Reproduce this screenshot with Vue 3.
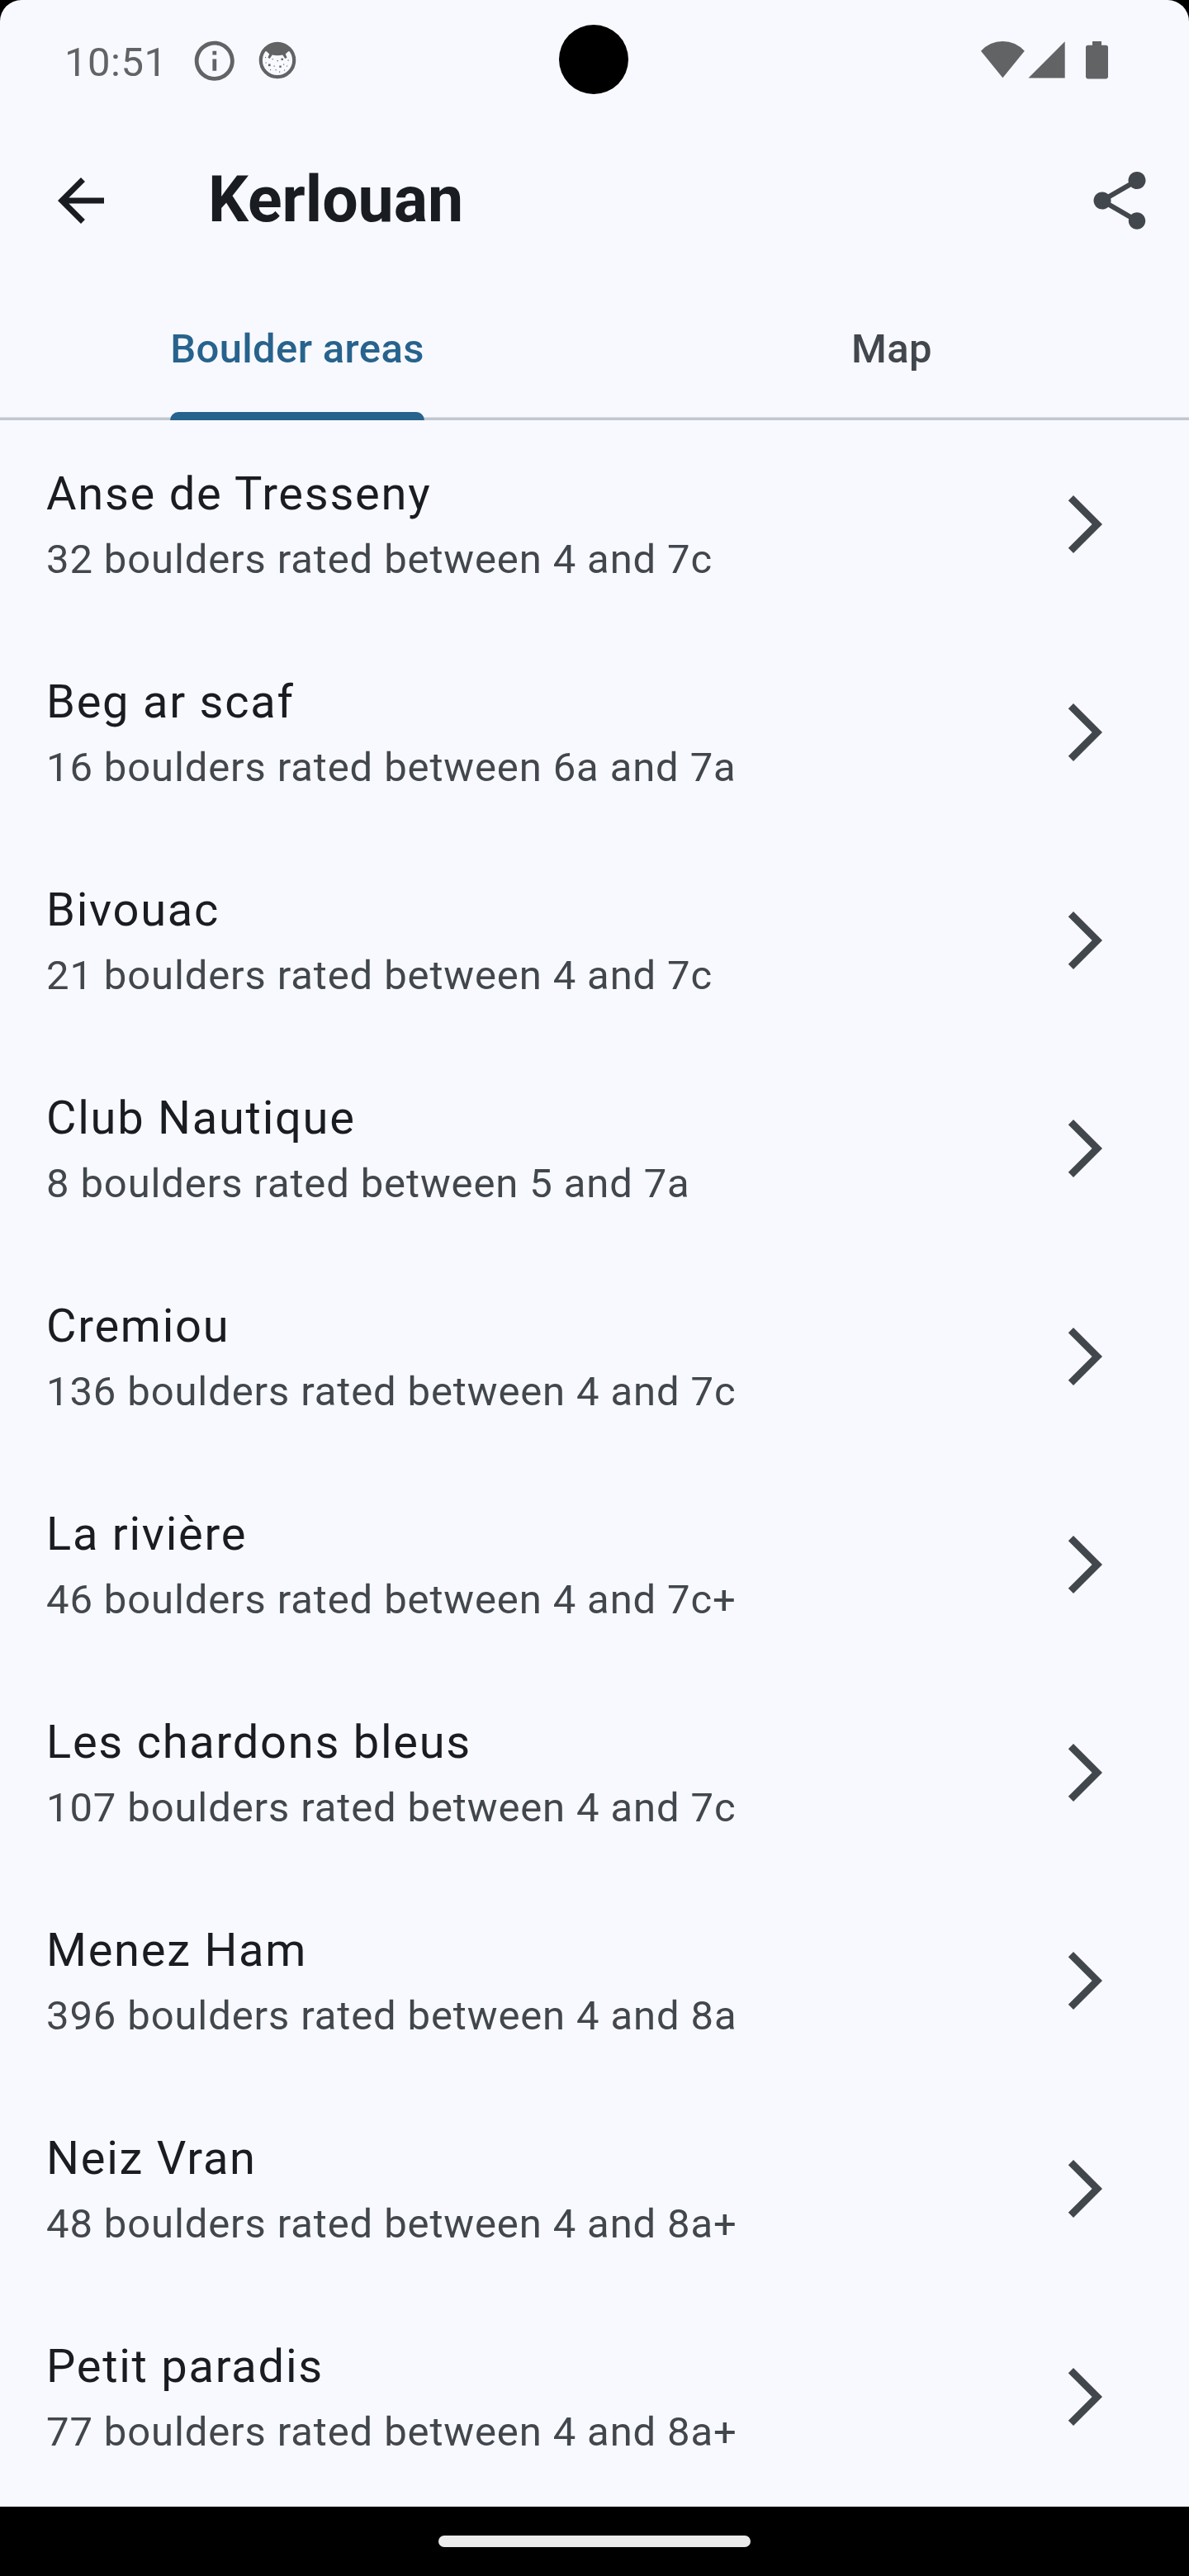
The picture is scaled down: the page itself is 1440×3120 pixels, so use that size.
<script setup>
const tabs = [
  { label: 'Boulder areas', active: true },
  { label: 'Map', active: false },
]

const areas = [
  { name: 'Anse de Tresseny', detail: '32 boulders rated between 4 and 7c' },
  { name: 'Beg ar scaf', detail: '16 boulders rated between 6a and 7a' },
  { name: 'Bivouac', detail: '21 boulders rated between 4 and 7c' },
  { name: 'Club Nautique', detail: '8 boulders rated between 5 and 7a' },
  { name: 'Cremiou', detail: '136 boulders rated between 4 and 7c' },
  { name: 'La rivière', detail: '46 boulders rated between 4 and 7c+' },
  { name: 'Les chardons bleus', detail: '107 boulders rated between 4 and 7c' },
  { name: 'Menez Ham', detail: '396 boulders rated between 4 and 8a' },
  { name: 'Neiz Vran', detail: '48 boulders rated between 4 and 8a+' },
  { name: 'Petit paradis', detail: '77 boulders rated between 4 and 8a+' },
]
</script>

<template>
  <div class="device">
    <div class="screen">
      <div class="status-bar">
        <div class="status-left">
          <span class="clock">10:51</span>
          <svg class="info" viewBox="0 0 24 24">
            <path d="M11 7h2v2h-2zM11 11h2v6h-2zM12 2C6.48 2 2 6.48 2 12s4.48 10 10 10 10-4.48 10-10S17.52 2 12 2zm0 18c-4.41 0-8-3.59-8-8s3.59-8 8-8 8 3.59 8 8-3.59 8-8 8z" />
          </svg>
          <svg class="face" viewBox="0 0 46 46">
            <circle cx="23" cy="23" r="20.2" fill="none" stroke="currentColor" stroke-width="4.2" />
            <path d="M7 12Q13 3 23 2.500Q33 3 39 12L36.200 12.300L32.700 15.500L34.600 19.800L32.300 21L29.300 16.500Q23 17.800 16.700 16.500L13.700 21L11.400 19.800L13.300 15.500L9.800 12.300Z" />
            <g>
              <rect x="27.500" y="20.600" width="2.400" height="2.400" />
              <rect x="12" y="27.500" width="2.600" height="2.600" />
              <rect x="25.300" y="29.500" width="2.400" height="2.400" />
              <rect x="16.500" y="21" width="1.200" height="1.200" />
              <rect x="22.500" y="23" width="1.300" height="1.300" />
              <rect x="8" y="19" width="1.100" height="1.100" />
              <rect x="35.500" y="22.500" width="1.200" height="1.200" />
              <rect x="8.500" y="25.500" width="1.100" height="1.100" />
              <rect x="18.500" y="29.500" width="1.200" height="1.200" />
              <rect x="30" y="27.500" width="1.200" height="1.200" />
              <rect x="34" y="29.500" width="1.100" height="1.100" />
              <rect x="14" y="34" width="1.100" height="1.100" />
              <rect x="20.500" y="34" width="1.200" height="1.200" />
              <rect x="25" y="36.500" width="1.200" height="1.200" />
              <rect x="31" y="34.500" width="1.100" height="1.100" />
            </g>
          </svg>
        </div>
        <div class="status-right">
          <svg class="signals" viewBox="0 0 155 46">
            <path d="M0 11.700Q11 0 26.400 0T52.800 11.700L26.400 44.200Z" />
            <path d="M57.500 44.500H101.700V.3Z" />
            <path d="M135 0h11v4.800h5.200q2.800 0 2.800 2.800v35q0 2.800-2.800 2.800H129.800q-2.800 0-2.800-2.800v-35q0-2.800 2.800-2.800H135Z" />
          </svg>
        </div>
        <div class="camera"></div>
      </div>

      <header class="app-bar">
        <svg class="icon back" viewBox="0 0 24 24">
          <path d="M20 11H7.830l5.590-5.590L12 4l-8 8 8 8 1.410-1.410L7.830 13H20v-2z" />
        </svg>
        <h1 class="title">Kerlouan</h1>
        <svg class="icon share" viewBox="0 0 24 24">
          <path d="M18 16.080c-.76 0-1.440.3-1.960.77L8.910 12.700c.05-.23.09-.46.09-.7s-.04-.47-.09-.7l7.050-4.110c.54.5 1.250.81 2.040.81 1.660 0 3-1.340 3-3s-1.340-3-3-3-3 1.340-3 3c0 .24.04.47.09.7L8.040 9.810C7.500 9.310 6.790 9 6 9c-1.660 0-3 1.340-3 3s1.340 3 3 3c.79 0 1.500-.31 2.040-.81l7.120 4.160c-.05.21-.08.43-.08.65 0 1.610 1.310 2.920 2.920 2.920s2.920-1.310 2.920-2.920-1.310-2.920-2.920-2.920z" />
        </svg>
      </header>

      <nav class="tabs">
        <div v-for="tab in tabs" :key="tab.label" class="tab">
          <div class="tab-label" :class="{ active: tab.active }">{{ tab.label }}</div>
        </div>
      </nav>

      <ul class="areas">
        <li v-for="area in areas" :key="area.name" class="area">
          <div class="area-text">
            <div class="name">{{ area.name }}</div>
            <div class="detail">{{ area.detail }}</div>
          </div>
          <svg class="icon" viewBox="0 0 24 24">
            <path d="M6.230 20.230L8 22l10-10L8 2 6.230 3.770 14.460 12z" />
          </svg>
        </li>
      </ul>
    </div>

    <div class="gesture-bar">
      <div class="handle"></div>
    </div>
  </div>
</template>

<style>
body {
  margin: 0;
  background: #000;
}
</style>

<style scoped>
.device {
  width: 1440px;
  height: 3120px;
  display: flex;
  flex-direction: column;
  background: #000;
  font-family: Roboto, "Liberation Sans", sans-serif;
  overflow: hidden;
}
.screen {
  height: 3036px;
  background: #f8f9ff;
  border-radius: 26px 26px 0 0;
  color: #42474e;
}
svg {
  display: block;
  fill: currentColor;
  flex: none;
}
.status-bar {
  position: relative;
  height: 131px;
  box-sizing: border-box;
  padding: 45px 98px 0 78px;
  display: flex;
  justify-content: space-between;
  align-items: flex-start;
  color: #626365;
}
.status-left {
  display: flex;
  align-items: flex-start;
}
.clock {
  width: 153px;
  font-size: 49px;
  line-height: 61px;
  letter-spacing: 0.5px;
}
.info {
  width: 57.6px;
  height: 57.6px;
}
.face {
  width: 46px;
  height: 46px;
  margin: 5.300px 0 0 24.900px;
}
.status-right {
  padding-top: 5px;
}
.signals {
  width: 155px;
  height: 46px;
  margin-right: -1px;
}
.camera {
  position: absolute;
  left: 677px;
  top: 30px;
  width: 84px;
  height: 84px;
  border-radius: 50%;
  background: #000;
}
.app-bar {
  height: 224px;
  box-sizing: border-box;
  padding: 0 42px 0 56px;
  display: flex;
  align-items: center;
}
.icon {
  width: 84px;
  height: 84px;
}
.back {
  color: #191c20;
}
.title {
  flex: 1;
  margin: 0 0 2px 112px;
  font-size: 77px;
  line-height: 98px;
  font-weight: 700;
  color: #191c20;
}
.tabs {
  display: flex;
  height: 154px;
  background: linear-gradient(#dddfe7, #dddfe7) 0 150px / 100% 1px no-repeat,
    linear-gradient(#c2c7cf, #c2c7cf) 0 151px / 100% 3px no-repeat;
}
.tab {
  flex: 1;
  display: flex;
  justify-content: center;
}
.tab-label {
  position: relative;
  padding-top: 33px;
  font-size: 49px;
  line-height: 70px;
  font-weight: 500;
  letter-spacing: 0.35px;
}
.tab-label.active {
  color: #27638c;
}
.tab-label.active::after {
  content: "";
  position: absolute;
  left: 0;
  right: 0;
  bottom: 0;
  height: 10.500px;
  border-radius: 10.500px 10.500px 0 0;
  background: #27638c;
}
.areas {
  margin: 0;
  padding: 0;
  list-style: none;
}
.area {
  height: 252px;
  box-sizing: border-box;
  padding: 0 84px 0 56px;
  display: flex;
  align-items: center;
  justify-content: space-between;
}
.area-text {
  height: 154px;
}
.name {
  font-size: 56px;
  line-height: 80px;
  letter-spacing: 1.750px;
  color: #191c20;
}
.detail {
  margin-top: 4px;
  font-size: 49px;
  line-height: 71px;
  letter-spacing: 0.875px;
}
.gesture-bar {
  height: 84px;
  display: flex;
  justify-content: center;
  align-items: center;
}
.handle {
  width: 378px;
  height: 14px;
  border-radius: 7px;
  background: #ebebeb;
}
</style>
